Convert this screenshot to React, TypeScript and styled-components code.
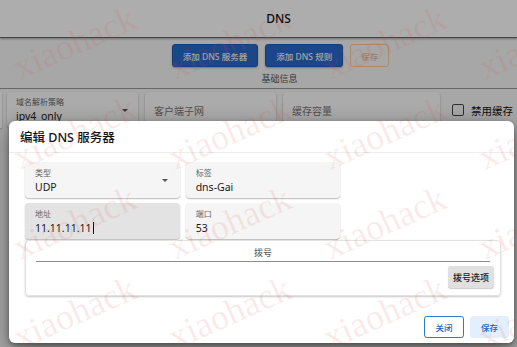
import React from 'react';
import styled, { createGlobalStyle } from 'styled-components';

const Global = createGlobalStyle`
  html, body { margin: 0; padding: 0; width: 517px; height: 347px; overflow: hidden; background: #f6f6f6; }
  body { font-family: "Noto Sans", "Noto Sans CJK SC", sans-serif; color: #222; }
  * { box-sizing: border-box; }
`;

const Page = styled.div`
  position: relative;
  width: 517px;
  height: 347px;
  overflow: hidden;
  background: #f6f6f6;
`;

const Header = styled.header`
  height: 38px;
  background: #fff;
  border-bottom: 1px solid #666;
  box-shadow: 0 1px 2px rgba(0, 0, 0, 0.35);
  display: flex;
  align-items: center;
  justify-content: center;
  padding-left: 40px;
  font-size: 12px;
  font-weight: 500;
  color: #111;
`;

const Toolbar = styled.div`
  display: flex;
  justify-content: center;
  gap: 7px;
  margin-top: 6px;
  padding-left: 44px;
`;

const TopButton = styled.button<{ $ghost?: boolean }>`
  height: 23px;
  padding: 0 10px;
  border-radius: 3px;
  font-family: inherit;
  font-size: 8.5px;
  font-weight: 500;
  border: 1px solid ${(p) => (p.$ghost ? 'rgba(236, 168, 80, 0.5)' : '#1f5bb5')};
  background: ${(p) => (p.$ghost ? 'transparent' : '#2868c8')};
  color: ${(p) => (p.$ghost ? 'rgba(205, 145, 70, 0.55)' : '#f2f2f2')};
  box-shadow: ${(p) => (p.$ghost ? 'none' : '0 1px 2px rgba(0,0,0,0.3)')};
`;

const SectionLabel = styled.div`
  margin-top: 5px;
  text-align: center;
  padding-left: 42px;
  font-size: 9px;
  line-height: 14px;
  color: #555;
`;

const Rule = styled.div`
  height: 1px;
  margin-top: 2px;
  background: #999;
`;

const FieldRow = styled.div`
  display: flex;
  align-items: center;
  gap: 7px;
  margin-top: 3px;
`;

const Sliver = styled.div`
  width: 2px;
  height: 36px;
  margin-right: -2px;
  background: #fff;
  box-shadow: 0 1px 2px rgba(0, 0, 0, 0.3);
`;

const BgCard = styled.div<{ $w: number }>`
  width: ${(p) => p.$w}px;
  height: 36px;
  background: #fdfdfd;
  border-radius: 4px;
  box-shadow: 0 1px 2px rgba(0, 0, 0, 0.3);
  display: flex;
  align-items: center;
  padding: 0 10px 0 9px;
`;

const Stack = styled.div`
  flex: 1;
  display: flex;
  flex-direction: column;
`;

const SmallLabel = styled.span`
  font-size: 8px;
  line-height: 10px;
  color: #666;
`;

const Value = styled.span`
  margin-top: 2px;
  font-size: 10.5px;
  line-height: 14px;
  color: #1a1a1a;
`;

const Placeholder = styled.span`
  font-size: 10px;
  color: #777;
`;

const Caret = styled.span`
  width: 0;
  height: 0;
  border-left: 3.5px solid transparent;
  border-right: 3.5px solid transparent;
  border-top: 3.5px solid #555;
`;

const CheckItem = styled.label`
  display: flex;
  align-items: center;
  gap: 7px;
  margin-left: 5px;
  font-size: 10.5px;
  color: #111;
`;

const Box = styled.span`
  width: 12px;
  height: 12px;
  border: 1.5px solid #444;
  border-radius: 2px;
`;

const Scrim = styled.div`
  position: absolute;
  inset: 0;
  background: rgba(0, 0, 0, 0.32);
`;

const Dialog = styled.div`
  position: absolute;
  left: 9px;
  top: 121px;
  width: 505px;
  background: #fff;
  border-radius: 6px;
  box-shadow: 0 6px 20px rgba(0, 0, 0, 0.45), 0 2px 4px rgba(0, 0, 0, 0.3);
`;

const DialogTitle = styled.div`
  padding: 8px 11px 5px;
  font-size: 12.5px;
  line-height: 18px;
  font-weight: 500;
  color: #111;
  border-bottom: 1px solid #eee;
`;

const DialogBody = styled.div`
  padding: 9px 13px 0 16px;
  display: flex;
  flex-direction: column;
  gap: 1px;
`;

const Grid = styled.div`
  display: grid;
  grid-template-columns: repeat(3, 1fr);
  gap: 5px 6px;
`;

const Field = styled.div<{ $active?: boolean }>`
  height: 36px;
  display: flex;
  align-items: center;
  padding: 0 12px 0 10px;
  border-radius: 4px;
  background: ${(p) => (p.$active ? '#e3e3e3' : '#f5f5f5')};
  box-shadow: 0 1px 1.5px rgba(0, 0, 0, 0.28);
`;

const FieldStack = styled.div`
  flex: 1;
  display: flex;
  flex-direction: column;
  padding-top: 1px;
`;

const TextCursor = styled.span`
  display: inline-block;
  width: 1px;
  height: 12px;
  margin-left: 1px;
  vertical-align: -2px;
  background: #111;
`;

const Group = styled.div`
  border: 1px solid #e2e2e2;
  border-radius: 4px;
  box-shadow: 0 1px 2px rgba(0, 0, 0, 0.22);
  padding: 6px 0 7px;
  display: flex;
  flex-direction: column;
`;

const Legend = styled.div`
  text-align: center;
  font-size: 9px;
  line-height: 12px;
  color: #555;
`;

const GroupRule = styled.div`
  height: 1px;
  margin: 2px 10px 0;
  background: #8c8c8c;
`;

const GroupActions = styled.div`
  display: flex;
  justify-content: flex-end;
  margin-top: 4px;
  padding-right: 6px;
`;

const GreyButton = styled.button`
  height: 22px;
  padding: 0 5px;
  border: none;
  border-radius: 3px;
  background: #e0e0e0;
  box-shadow: 0 1px 1px rgba(0, 0, 0, 0.2);
  font-family: inherit;
  font-size: 9px;
  font-weight: 500;
  color: #1a1a1a;
`;

const Actions = styled.div`
  display: flex;
  justify-content: flex-end;
  gap: 6px;
  padding: 20px 5px 5px;
`;

const ActionButton = styled.button<{ $filled?: boolean }>`
  height: 22px;
  width: ${(p) => (p.$filled ? 39 : 40)}px;
  padding: 0;
  border-radius: 3px;
  font-family: inherit;
  font-size: 8.5px;
  font-weight: 500;
  color: #1565c0;
  border: 1px solid ${(p) => (p.$filled ? '#e3effc' : '#2a78d0')};
  background: ${(p) => (p.$filled ? '#e3effc' : '#fff')};
`;

const Watermark = styled.div`
  position: absolute;
  left: 20px;
  top: -10px;
  display: grid;
  grid-template-columns: repeat(4, 155px);
  grid-auto-rows: 90px;
  pointer-events: none;
  z-index: 10;
`;

const Mark = styled.div`
  display: flex;
  align-items: flex-end;
`;

const MarkText = styled.span`
  font-family: "Liberation Serif", serif;
  font-size: 36px;
  line-height: 36px;
  margin-bottom: -6px;
  color: rgba(215, 80, 80, 0.12);
  transform-origin: 0 30px;
  transform: rotate(-24deg);
  white-space: nowrap;
`;

export default function App() {
  const marks = Array.from({ length: 16 });
  return (
    <Page>
      <Global />
      <Header>DNS</Header>
      <Toolbar>
        <TopButton>添加 DNS 服务器</TopButton>
        <TopButton>添加 DNS 规则</TopButton>
        <TopButton $ghost>保存</TopButton>
      </Toolbar>
      <SectionLabel>基础信息</SectionLabel>
      <Rule />
      <FieldRow>
        <Sliver />
        <BgCard $w={131}>
          <Stack>
            <SmallLabel>域名解析策略</SmallLabel>
            <Value>ipv4_only</Value>
          </Stack>
          <Caret />
        </BgCard>
        <BgCard $w={131}>
          <Placeholder>客户端子网</Placeholder>
        </BgCard>
        <BgCard $w={157}>
          <Placeholder>缓存容量</Placeholder>
        </BgCard>
        <CheckItem>
          <Box />
          禁用缓存
        </CheckItem>
      </FieldRow>

      <Scrim />

      <Dialog>
        <DialogTitle>编辑 DNS 服务器</DialogTitle>
        <DialogBody>
          <Grid>
            <Field>
              <FieldStack>
                <SmallLabel>类型</SmallLabel>
                <Value>UDP</Value>
              </FieldStack>
              <Caret />
            </Field>
            <Field>
              <FieldStack>
                <SmallLabel>标签</SmallLabel>
                <Value>dns-Gai</Value>
              </FieldStack>
            </Field>
            <div />
            <Field $active>
              <FieldStack>
                <SmallLabel>地址</SmallLabel>
                <Value>
                  11.11.11.11
                  <TextCursor />
                </Value>
              </FieldStack>
            </Field>
            <Field>
              <FieldStack>
                <SmallLabel>端口</SmallLabel>
                <Value>53</Value>
              </FieldStack>
            </Field>
          </Grid>
          <Group>
            <Legend>拨号</Legend>
            <GroupRule />
            <GroupActions>
              <GreyButton>拨号选项</GreyButton>
            </GroupActions>
          </Group>
        </DialogBody>
        <Actions>
          <ActionButton>关闭</ActionButton>
          <ActionButton $filled>保存</ActionButton>
        </Actions>
      </Dialog>

      <Watermark>
        {marks.map((_, i) => (
          <Mark key={i}>
            <MarkText>xiaohack</MarkText>
          </Mark>
        ))}
      </Watermark>
    </Page>
  );
}
